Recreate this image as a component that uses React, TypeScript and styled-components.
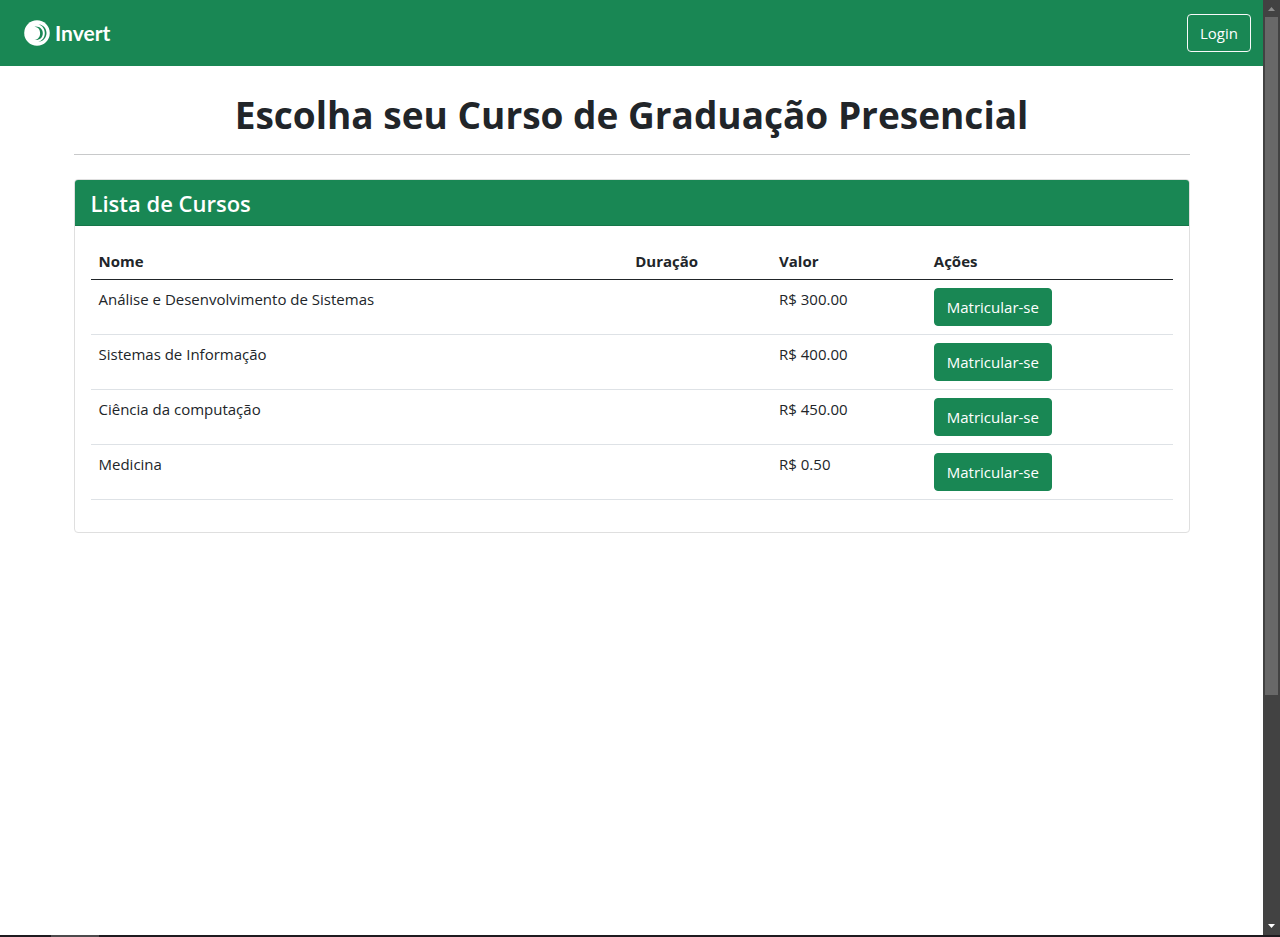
import React from "react";
import styled, { createGlobalStyle } from "styled-components";

const GREEN = "#198754";
const INK = "#212529";

const GlobalStyle = createGlobalStyle`
  *, *::before, *::after { box-sizing: border-box; }
  body {
    margin: 0;
    background: #fff;
    color: ${INK};
    font-family: "Open Sans", "Noto Sans", sans-serif;
    font-size: 15px;
    line-height: 22px;
  }
`;

const Screen = styled.div`
  display: flex;
  flex-direction: column;
  height: 100vh;
`;

const Viewport = styled.div`
  display: flex;
  flex: 1;
  min-height: 0;
`;

const Page = styled.div`
  flex: 1;
  min-width: 0;
  overflow: hidden;
`;

const Navbar = styled.header`
  display: flex;
  align-items: center;
  justify-content: space-between;
  padding: 14px 12px 14px 24px;
  background: ${GREEN};
`;

const Brand = styled.a`
  display: flex;
  align-items: center;
  color: #fff;
  text-decoration: none;
`;

const Button = styled.button<{ $outline?: boolean }>`
  display: block;
  height: 38px;
  padding: 0 12px;
  border: 1px solid ${(p) => (p.$outline ? "#f8f9fa" : GREEN)};
  border-radius: 4px;
  background: ${GREEN};
  color: #fff;
  font: inherit;
  cursor: pointer;
`;

const Container = styled.main`
  max-width: 1140px;
  margin: 0 auto;
  padding: 26px 12px 0;
`;

const Title = styled.h1`
  margin: 0 0 16px;
  font-size: 37px;
  font-weight: 700;
  line-height: 46px;
  text-align: center;
`;

const Divider = styled.hr`
  height: 1px;
  margin: 0 0 24px;
  border: 0;
  background: #c8c9ca;
`;

const Card = styled.section`
  border: 1px solid #dfdfdf;
  border-radius: 4px;
  overflow: hidden;
`;

const CardTitle = styled.h2`
  margin: 0;
  padding: 9px 16px 7px;
  border-bottom: 1px solid #167649;
  background: ${GREEN};
  color: #fff;
  font-size: 22px;
  font-weight: 600;
  line-height: 29px;
`;

const CardBody = styled.div`
  padding: 16px 16px 32px;
`;

const Table = styled.table`
  width: 100%;
  table-layout: fixed;
  border-collapse: separate;
  border-spacing: 0;
`;

const HeadCell = styled.th<{ $width: string }>`
  width: ${(p) => p.$width};
  padding: 8px 8px 7px;
  border-bottom: 1px solid ${INK};
  font-weight: 700;
  text-align: left;
`;

const Cell = styled.td`
  padding: 8px;
  border-bottom: 1px solid #dee2e6;
  vertical-align: top;
`;

const ScrollTrack = styled.div`
  display: flex;
  flex-direction: column;
  width: 17px;
  padding: 0 2px;
  background: #424242;
`;

const ScrollArrow = styled.svg`
  display: block;
  width: 13px;
  height: 17px;
`;

const ScrollThumb = styled.div`
  flex: 678;
  background: #686868;
`;

const ScrollRest = styled.div`
  flex: 223;
`;

const BottomEdge = styled.div`
  display: flex;
  height: 2px;
  padding-left: 51px;
  background: #1f1b1f;
`;

const ActiveMark = styled.div`
  width: 48px;
  background: #4c4a4c;
`;

const columns = [
  { label: "Nome", width: "49.6%" },
  { label: "Duração", width: "13.3%" },
  { label: "Valor", width: "14.3%" },
  { label: "Ações", width: "22.8%" },
];

const courses = [
  { name: "Análise e Desenvolvimento de Sistemas", duration: "", price: "R$ 300.00" },
  { name: "Sistemas de Informação", duration: "", price: "R$ 400.00" },
  { name: "Ciência da computação", duration: "", price: "R$ 450.00" },
  { name: "Medicina", duration: "", price: "R$ 0.50" },
];

const BrandName = styled.span`
  margin-left: 5px;
  font-family: Lato, sans-serif;
  font-size: 21px;
  font-weight: 700;
`;

const Logo = () => (
  <svg width="26" height="26" viewBox="0 0 26 26" aria-hidden="true">
    <circle cx="13" cy="13" r="12.8" fill="#fff" />
    <path d="M10.500 6.500C15.500 5.900 18.800 8.900 18.800 13.200S15.500 20.600 10.500 20C14.400 19.200 16.100 16.600 16.100 13.200S14.400 7.300 10.500 6.500Z" fill={GREEN} />
    <path d="M14.300 4.200C19.200 4.600 22.500 8.400 22.500 13.100S19.200 21.600 14.300 22C18.600 20.600 20.800 17.200 20.800 13.100S18.600 5.600 14.300 4.200Z" fill={GREEN} />
  </svg>
);

export default function App() {
  return (
    <Screen>
      <GlobalStyle />
      <Viewport>
        <Page>
          <Navbar>
            <Brand href="#">
              <Logo />
              <BrandName>Invert</BrandName>
            </Brand>
            <Button type="button" $outline>Login</Button>
          </Navbar>
          <Container>
            <Title>Escolha seu Curso de Graduação Presencial</Title>
            <Divider />
            <Card>
              <CardTitle>Lista de Cursos</CardTitle>
              <CardBody>
                <Table>
                  <thead>
                    <tr>
                      {columns.map((c) => (
                        <HeadCell key={c.label} scope="col" $width={c.width}>{c.label}</HeadCell>
                      ))}
                    </tr>
                  </thead>
                  <tbody>
                    {courses.map((c) => (
                      <tr key={c.name}>
                        <Cell>{c.name}</Cell>
                        <Cell>{c.duration}</Cell>
                        <Cell>{c.price}</Cell>
                        <Cell><Button type="button">Matricular-se</Button></Cell>
                      </tr>
                    ))}
                  </tbody>
                </Table>
              </CardBody>
            </Card>
          </Container>
        </Page>
        <ScrollTrack aria-hidden="true">
          <ScrollArrow viewBox="0 0 13 17"><path d="M3 11 6.500 7 10 11Z" fill="#8c8c8c" /></ScrollArrow>
          <ScrollThumb />
          <ScrollRest />
          <ScrollArrow viewBox="0 0 13 17"><path d="M3 6h7L6.500 10Z" fill="#fff" /></ScrollArrow>
        </ScrollTrack>
      </Viewport>
      <BottomEdge><ActiveMark /></BottomEdge>
    </Screen>
  );
}
